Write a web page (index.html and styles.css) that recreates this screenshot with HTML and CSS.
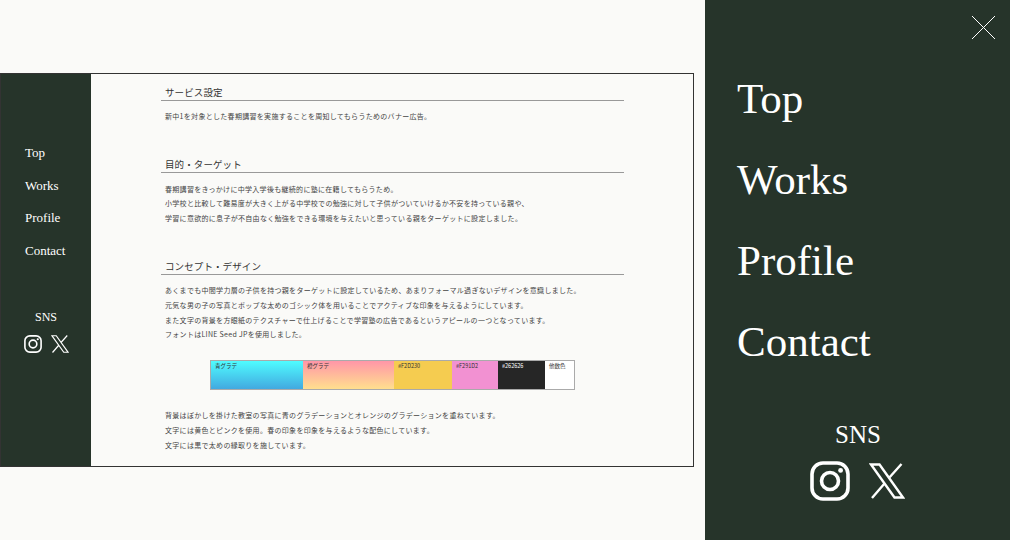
FILE: index.html
```html
<!DOCTYPE html>
<html lang="ja">
<head>
    <meta charset="UTF-8">
    <meta name="viewport" content="width=device-width, initial-scale=1.0">
    <title>Works</title>
    <link rel="stylesheet" href="styles.css">
</head>
<body>

    <div class="frame">
        <aside class="side">
            <nav class="side-nav">
                <a href="#">Top</a>
                <a href="#">Works</a>
                <a href="#">Profile</a>
                <a href="#">Contact</a>
            </nav>
            <div class="side-sns">
                <p>SNS</p>
                <div class="side-icons">
                    <svg class="ig" viewBox="0 0 40 40"><rect x="2" y="2" width="36" height="36" rx="11" fill="none" stroke="#fff" stroke-width="3.6"/><circle cx="20" cy="20" r="8.5" fill="none" stroke="#fff" stroke-width="3.6"/><circle cx="30.6" cy="9.4" r="2.4" fill="#fff"/></svg>
                    <svg class="x" viewBox="0 0 36 36"><path fill="none" stroke="#fff" stroke-width="2.4" d="M2 1.5H10.5L34 34.5H25.5ZM32.5 1L19.5 15.5M3 35L15.5 20.5"/></svg>
                </div>
            </div>
        </aside>

        <main class="detail">
            <section class="block first">
                <h2>サービス設定</h2>
                <p>新中1を対象とした春期講習を実施することを周知してもらうためのバナー広告。</p>
            </section>

            <section class="block">
                <h2>目的・ターゲット</h2>
                <p>春期講習をきっかけに中学入学後も継続的に塾に在籍してもらうため。</p>
                <p>小学校と比較して難易度が大きく上がる中学校での勉強に対して子供がついていけるか不安を持っている親や、</p>
                <p>学習に意欲的に息子が不自由なく勉強をできる環境を与えたいと思っている親をターゲットに設定しました。</p>
            </section>

            <section class="block">
                <h2>コンセプト・デザイン</h2>
                <p>あくまでも中間学力層の子供を持つ親をターゲットに設定しているため、あまりフォーマル過ぎないデザインを意識しました。</p>
                <p>元気な男の子の写真とポップな太めのゴシック体を用いることでアクティブな印象を与えるようにしています。</p>
                <p>また文字の背景を方眼紙のテクスチャーで仕上げることで学習塾の広告であるというアピールの一つとなっています。</p>
                <p>フォントはLINE Seed JPを使用しました。</p>

                <div class="colors">
                    <div class="c-blue">青グラデ</div>
                    <div class="c-orange">橙グラデ</div>
                    <div class="c-yellow">#F2D230</div>
                    <div class="c-pink">#F291D2</div>
                    <div class="c-black">#262626</div>
                    <div class="c-white">他数色</div>
                </div>

                <p>背景はぼかしを掛けた教室の写真に青のグラデーションとオレンジのグラデーションを重ねています。</p>
                <p>文字には黄色とピンクを使用。春の印象を印象を与えるような配色にしています。</p>
                <p>文字には黒で太めの縁取りを施しています。</p>
            </section>
        </main>
    </div>

    <div class="menu">
        <svg class="close" viewBox="0 0 23 23"><path d="M0 0L23 23M23 0L0 23" stroke="#fff" stroke-width="1" fill="none"/></svg>
        <nav class="menu-nav">
            <a href="#">Top</a>
            <a href="#">Works</a>
            <a href="#">Profile</a>
            <a href="#">Contact</a>
        </nav>
        <div class="menu-sns">
            <p>SNS</p>
            <div class="menu-icons">
                <svg class="ig" viewBox="0 0 40 40"><rect x="2" y="2" width="36" height="36" rx="11" fill="none" stroke="#fff" stroke-width="3.6"/><circle cx="20" cy="20" r="8.5" fill="none" stroke="#fff" stroke-width="3.6"/><circle cx="30.6" cy="9.4" r="2.4" fill="#fff"/></svg>
                <svg class="x" viewBox="0 0 36 36"><path fill="none" stroke="#fff" stroke-width="2.4" d="M2 1.5H10.5L34 34.5H25.5ZM32.5 1L19.5 15.5M3 35L15.5 20.5"/></svg>
            </div>
        </div>
    </div>

</body>
</html>
```

FILE: styles.css
```css
body {
    margin: 0;
    height: 540px;
    overflow: hidden;
    background-color: #fafaf8;
    font-family: "Noto Sans CJK JP", "Noto Sans", sans-serif;
    color: #333;
}

p {
    margin: 0;
}

a {
    color: #fff;
    text-decoration: none;
}

.frame {
    display: flex;
    width: 694px;
    height: 394px;
    margin-top: 73px;
    box-sizing: border-box;
    border: 1px solid #333;
}

.side {
    width: 90px;
    flex-shrink: 0;
    background-color: #26342a;
    color: #fff;
    font-family: "Liberation Serif", serif;
}

.side-nav {
    display: flex;
    flex-direction: column;
    gap: 14.67px;
    padding: 70px 0 0 24px;
    font-size: 13px;
    line-height: 18px;
}

.side-sns {
    margin-top: 48px;
    text-align: center;
}

.side-sns p {
    font-size: 12px;
    line-height: 18px;
}

.side-icons {
    display: flex;
    justify-content: center;
    gap: 9px;
    margin-top: 9px;
    padding-left: 1px;
}

.side-icons .ig {
    width: 18px;
    height: 18px;
}

.side-icons .x {
    width: 18px;
    height: 18px;
}

.detail {
    flex: 1;
    min-width: 0;
    overflow: hidden;
    padding: 0 69px 0 70px;
}

.block {
    padding-top: 32.2px;
}

.block.first {
    padding-top: 10px;
}

.block h2 {
    margin: 0 0 8.4px;
    padding: 1px 0 1px 4px;
    border-bottom: 1px solid #999;
    font-size: 9.5px;
    font-weight: 400;
    line-height: 14px;
    letter-spacing: 0.1px;
}

.block p {
    padding-left: 4px;
    font-size: 7px;
    line-height: 14.7px;
    letter-spacing: 0.3px;
    color: #444;
}

.colors {
    display: flex;
    width: 365px;
    height: 30px;
    box-sizing: border-box;
    margin: 18px 0 18px 49px;
    border: 1px solid #aaa;
    font-size: 5.5px;
    line-height: 11px;
}

.colors div {
    padding-left: 4px;
    box-sizing: border-box;
}

.c-blue {
    width: 92px;
    background: linear-gradient(#4ffcff, #42a9e0);
}

.c-orange {
    width: 91px;
    background: linear-gradient(#ff96a8, #ffdf8e);
}

.c-yellow {
    width: 58px;
    background-color: #f5cc50;
}

.c-pink {
    width: 46px;
    background-color: #f291d2;
}

.c-black {
    width: 47px;
    background-color: #262626;
    color: #fff;
}

.c-white {
    flex: 1;
    background-color: #fff;
}

.menu {
    position: absolute;
    top: 0;
    right: 0;
    width: 305px;
    height: 540px;
    background-color: #26342a;
    color: #fff;
    font-family: "Liberation Serif", serif;
}

.close {
    position: absolute;
    top: 16px;
    right: 15px;
    width: 23px;
    height: 23px;
}

.menu-nav {
    display: flex;
    flex-direction: column;
    gap: 21px;
    padding: 69px 0 0 32px;
    font-size: 43px;
    line-height: 60px;
}

.menu-sns {
    margin-top: 45px;
    text-align: center;
}

.menu-sns p {
    font-size: 25px;
    line-height: 36px;
    margin-left: 1px;
}

.menu-icons {
    display: flex;
    justify-content: center;
    gap: 19px;
    margin-top: 8px;
}

.menu-icons .ig {
    width: 40px;
    height: 40px;
}

.menu-icons .x {
    width: 36px;
    height: 36px;
    margin-top: 2px;
}
```
